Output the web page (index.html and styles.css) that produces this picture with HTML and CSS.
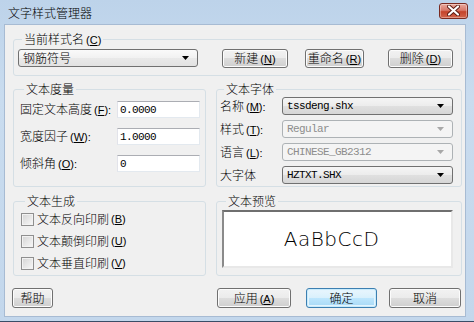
FILE: index.html
```html
<!DOCTYPE html>
<html lang="zh-CN">

<head>
  <meta charset="UTF-8" />
  <meta name="viewport" content="width=device-width, initial-scale=1.0" />
  <title>文字样式管理器</title>
  <link rel="stylesheet" href="styles.css">
</head>

<body>
  <div class="window">
    <div class="titlebar">
      <span class="title">文字样式管理器</span>
      <button class="close" title="关闭">
        <svg width="13" height="11" viewBox="0 0 13 11">
          <path d="M2 1.5 L11 9.5 M11 1.5 L2 9.5" stroke="#5a1a12" stroke-width="4" stroke-linecap="round" />
          <path d="M2 1.5 L11 9.5 M11 1.5 L2 9.5" stroke="#fff" stroke-width="2.2" stroke-linecap="round" />
        </svg>
      </button>
    </div>

    <div class="client">
      <!-- 当前样式 -->
      <fieldset class="group group-current">
        <legend>当前样式名<span class="key">(<u>C</u>)</span></legend>
        <div class="current-row">
          <div class="combo combo-style">
            <span class="combo-text">钢筋符号</span>
            <svg class="arrow" width="7" height="4" viewBox="0 0 7 4"><path d="M0 0H7L3.5 4Z" /></svg>
          </div>
          <button class="btn btn-new">新建<span class="key">(<u>N</u>)</span></button>
          <button class="btn btn-rename">重命名<span class="key">(<u>R</u>)</span></button>
          <button class="btn btn-delete">删除<span class="key">(<u>D</u>)</span></button>
        </div>
      </fieldset>

      <div class="cols cols-mid">
        <!-- 文本度量 -->
        <fieldset class="group group-metric">
          <legend>文本度量</legend>
          <div class="field">
            <label>固定文本高度<span class="key">(<u>F</u>):</span></label>
            <div class="edit">0.0000</div>
          </div>
          <div class="field">
            <label>宽度因子<span class="key">(<u>W</u>):</span></label>
            <div class="edit">1.0000</div>
          </div>
          <div class="field">
            <label>倾斜角<span class="key">(<u>O</u>):</span></label>
            <div class="edit">0</div>
          </div>
        </fieldset>

        <!-- 文本字体 -->
        <fieldset class="group group-font">
          <legend>文本字体</legend>
          <div class="field">
            <label>名称<span class="key">(<u>M</u>):</span></label>
            <div class="combo">
              <span class="combo-text mono">tssdeng.shx</span>
              <svg class="arrow" width="7" height="4" viewBox="0 0 7 4"><path d="M0 0H7L3.5 4Z" /></svg>
            </div>
          </div>
          <div class="field">
            <label>样式<span class="key">(<u>T</u>):</span></label>
            <div class="combo disabled">
              <span class="combo-text mono">Regular</span>
              <svg class="arrow" width="7" height="4" viewBox="0 0 7 4"><path d="M0 0H7L3.5 4Z" /></svg>
            </div>
          </div>
          <div class="field">
            <label>语言<span class="key">(<u>L</u>):</span></label>
            <div class="combo disabled">
              <span class="combo-text mono">CHINESE_GB2312</span>
              <svg class="arrow" width="7" height="4" viewBox="0 0 7 4"><path d="M0 0H7L3.5 4Z" /></svg>
            </div>
          </div>
          <div class="field">
            <label>大字体</label>
            <div class="combo">
              <span class="combo-text mono">HZTXT.SHX</span>
              <svg class="arrow" width="7" height="4" viewBox="0 0 7 4"><path d="M0 0H7L3.5 4Z" /></svg>
            </div>
          </div>
        </fieldset>
      </div>

      <div class="cols cols-low">
        <!-- 文本生成 -->
        <fieldset class="group group-gen">
          <legend>文本生成</legend>
          <div class="check"><span class="box"></span>文本反向印刷<span class="key">(<u>B</u>)</span></div>
          <div class="check"><span class="box"></span>文本颠倒印刷<span class="key">(<u>U</u>)</span></div>
          <div class="check"><span class="box"></span>文本垂直印刷<span class="key">(<u>V</u>)</span></div>
        </fieldset>

        <!-- 文本预览 -->
        <fieldset class="group group-preview">
          <legend>文本预览</legend>
          <div class="preview">AaBbCcD</div>
        </fieldset>
      </div>

      <div class="actions">
        <button class="btn btn-help">帮助</button>
        <button class="btn btn-apply">应用<span class="key">(<u>A</u>)</span></button>
        <button class="btn btn-ok default">确定</button>
        <button class="btn btn-cancel">取消</button>
      </div>
    </div>
  </div>
</body>

</html>
```

FILE: styles.css
```css
* {
  box-sizing: border-box;
}

body {
  margin: 0;
  font-family: "Noto Sans CJK SC", "Noto Sans", sans-serif;
  font-size: 12px;
  font-weight: 300;
  line-height: 14px;
  color: #000;
}

.window {
  width: 474px;
  height: 322px;
  display: flex;
  flex-direction: column;
  padding: 0 8px 4px 4px;
  background: linear-gradient(#bdd3ea, #c9dcef 30%, #c3d7ec);
  border-bottom: 1px solid #3a4d66;
}

.titlebar {
  height: 24px;
  display: flex;
  align-items: center;
  justify-content: space-between;
  padding-left: 4px;
  margin-right: -2px;
}

.title {
  font-size: 12px;
  padding-top: 1px;
  color: #000;
}

.close {
  width: 29px;
  height: 16px;
  margin-top: -3px;
  padding: 0;
  border: 1px solid #7a2a20;
  border-radius: 3px;
  background: linear-gradient(#e9a99c, #d8796a 45%, #c4432b 55%, #d2654c);
  box-shadow: inset 0 0 0 1px rgba(255, 255, 255, 0.35);
  display: flex;
  align-items: center;
  justify-content: center;
}

.client {
  flex: 1;
  background: #f0f0f0;
  border: 1px solid #a7bbd3;
  padding: 7px 3px 0 8px;
  display: flex;
  flex-direction: column;
}

/* group boxes */
.group {
  margin: 0;
  border: 1px solid #d5dfe5;
  border-radius: 3px;
  min-width: 0;
}

.group legend {
  margin-left: 4px;
  padding: 0 2px;
  height: 14px;
  line-height: 14px;
}

.key {
  font-family: "Liberation Sans", sans-serif;
  font-size: 11px;
  font-weight: 400;
  margin-left: 2px;
}

.key u {
  text-decoration-thickness: 1px;
  text-underline-offset: 1px;
}

.group-current {
  padding: 3px 4px 8px 4px;
}

.current-row {
  display: flex;
  align-items: center;
  height: 18px;
}

/* combo boxes */
.combo {
  height: 18px;
  display: flex;
  align-items: center;
  justify-content: space-between;
  padding: 0 8px 0 4px;
  border: 1px solid #707070;
  border-radius: 3px;
  background: linear-gradient(#f5f5f5, #ececec 50%, #e0e0e0 50%, #d6d6d6);
}

.combo-style {
  width: 180px;
  background: linear-gradient(#fafafa, #f1f1f1 50%, #e9e9e9 50%, #e2e2e2);
}

.combo .arrow {
  fill: #000;
}

.combo.disabled {
  border-color: #adb2b5;
  background: #f4f4f4;
  color: #8d8d8d;
}

.combo.disabled .arrow {
  fill: #a8a8a8;
}

.mono {
  font-family: "Liberation Mono", monospace;
  font-size: 11px;
  font-weight: 400;
  letter-spacing: -0.6px;
}

/* buttons */
.btn {
  height: 19px;
  padding: 0;
  font-family: inherit;
  font-size: 12px;
  font-weight: 300;
  line-height: 14px;
  color: #000;
  border: 1px solid #707070;
  border-radius: 3px;
  background: linear-gradient(#f2f2f2, #ebebeb 50%, #dddddd 50%, #cfcfcf);
  box-shadow: inset 0 0 0 1px #fcfcfc;
}

.btn-new {
  width: 66px;
  margin-left: 24px;
}

.btn-rename {
  width: 59px;
  margin-left: 17px;
}

.btn-delete {
  width: 65px;
  margin-left: 24px;
}

.btn.default {
  border-color: #3c7fb1;
  background: linear-gradient(#eaf6fd, #d9f0fc 50%, #bee6fd 50%, #a7d9f5);
  box-shadow: inset 0 0 0 1px #c8ebfc, inset 0 0 0 2px #e4f4fd;
}

/* middle columns */
.cols {
  display: flex;
  gap: 10px;
}

.cols-mid {
  margin-top: 6px;
}

.group-metric {
  width: 193px;
  padding: 5px 4px 13px 6px;
  display: flex;
  flex-direction: column;
  gap: 10px;
}

.group-metric .field {
  display: flex;
  align-items: center;
  height: 17px;
}

.group-metric label {
  width: 97px;
  white-space: nowrap;
}

.edit {
  width: 83px;
  height: 17px;
  padding: 1px 0 0 2px;
  background: #fff;
  border: 1px solid #e3e9ef;
  border-top-color: #abadb3;
  border-left-color: #e2e3ea;
  font-family: "Liberation Mono", monospace;
  font-size: 11px;
  font-weight: 400;
  letter-spacing: -0.6px;
  line-height: 14px;
}

.group-font {
  flex: 1;
  padding: 1px 7px 2px 3px;
  display: flex;
  flex-direction: column;
  gap: 5px;
}

.group-font .field {
  display: flex;
  align-items: center;
  height: 18px;
}

.group-font label {
  width: 62px;
  white-space: nowrap;
}

.group-font .combo {
  width: 171px;
}

/* lower columns */
.cols-low {
  margin-top: 7px;
}

.group-gen {
  width: 193px;
  padding: 0 4px 1px 7px;
}

.check {
  height: 22px;
  display: flex;
  align-items: center;
}

.check .box {
  width: 13px;
  height: 13px;
  margin-right: 3px;
  border: 1px solid #8f8f8f;
  background: linear-gradient(135deg, #d4d4d4, #f8f8f8);
  box-shadow: inset 0 0 0 1px #f2f2f2;
}

.group-preview {
  flex: 1;
  padding: 2px 8px 7px 5px;
}

.preview {
  height: 58px;
  background: #fff;
  border: 2px solid #fff;
  border-top-color: #6f6f6f;
  border-left-color: #8a8a8a;
  border-right-color: #e8e8e8;
  border-bottom-color: #e8e8e8;
  display: flex;
  align-items: center;
  justify-content: center;
  padding-right: 12px;
  font-family: "DejaVu Sans", sans-serif;
  font-weight: 200;
  font-size: 20px;
  letter-spacing: 0.5px;
}

/* bottom buttons */
.actions {
  display: flex;
  margin-top: 12px;
}

.btn-help {
  width: 41px;
  height: 20px;
  margin-left: -1px;
}

.btn-apply {
  width: 74px;
  height: 20px;
  margin-left: auto;
}

.btn-ok {
  width: 71px;
  height: 20px;
  margin-left: 15px;
}

.btn-cancel {
  width: 72px;
  height: 20px;
  margin-left: 12px;
  margin-right: 1px;
}
```
